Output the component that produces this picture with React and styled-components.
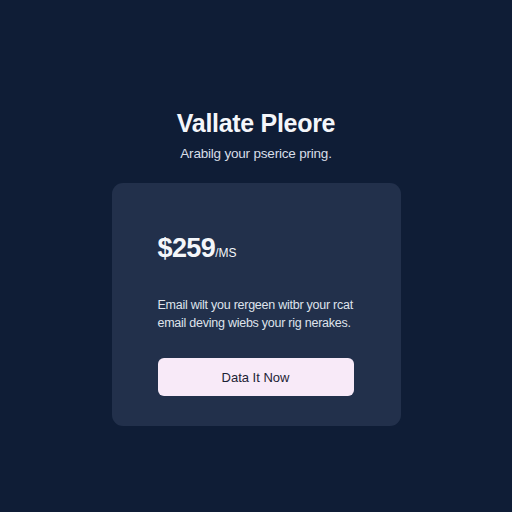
import React from 'react';
import styled, { createGlobalStyle } from 'styled-components';

const GlobalStyle = createGlobalStyle`
  html, body {
    margin: 0;
    padding: 0;
    background: #0f1d36;
  }
  body {
    font-family: 'Liberation Sans', Arial, sans-serif;
  }
`

const Page = styled.div`
  width: 512px;
  height: 512px;
  box-sizing: border-box;
  padding-top: 108px;
  display: flex;
  flex-direction: column;
  align-items: center;
  background: #0f1d36;
`

const Title = styled.h1`
  margin: 0;
  font-size: 25px;
  line-height: 30px;
  font-weight: 700;
  color: #f4f6fa;
  letter-spacing: -0.3px;
`

const Subtitle = styled.p`
  margin: 7px 0 0;
  font-size: 13.5px;
  line-height: 18px;
  color: #d8dde8;
  letter-spacing: -0.2px;
`

const Card = styled.div`
  margin-top: 20px;
  width: 289px;
  height: 243px;
  box-sizing: border-box;
  padding: 50px 47px 0 46px;
  background: #22304b;
  border-radius: 11px;
  display: flex;
  flex-direction: column;
`

const Price = styled.div`
  display: flex;
  align-items: baseline;
  color: #f4f6fa;
  font-size: 27px;
  line-height: 30px;
  font-weight: 700;
  letter-spacing: -0.6px;
`

const Period = styled.span`
  font-size: 12px;
  font-weight: 400;
  letter-spacing: 0;
`

const Body = styled.p`
  margin: 28px 0 0;
  font-size: 12.5px;
  line-height: 18px;
  color: #dfe3ec;
  white-space: nowrap;
  letter-spacing: -0.25px;
`

const Button = styled.button`
  margin-top: 26px;
  height: 38px;
  width: 100%;
  border: none;
  border-radius: 6px;
  background: #f8eaf8;
  color: #1d2235;
  font-family: 'Liberation Sans', Arial, sans-serif;
  font-size: 13px;
  cursor: pointer;
`

export default function App() {
  return (
    <>
      <GlobalStyle />
      <Page>
        <Title>Vallate Pleore</Title>
        <Subtitle>Arabilg your pserice pring.</Subtitle>
        <Card>
          <Price>
            $259<Period>/MS</Period>
          </Price>
          <Body>
            Email wilt you rergeen witbr your rcat
            <br />
            email deving wiebs your rig nerakes.
          </Body>
          <Button>Data It Now</Button>
        </Card>
      </Page>
    </>
  );
}
